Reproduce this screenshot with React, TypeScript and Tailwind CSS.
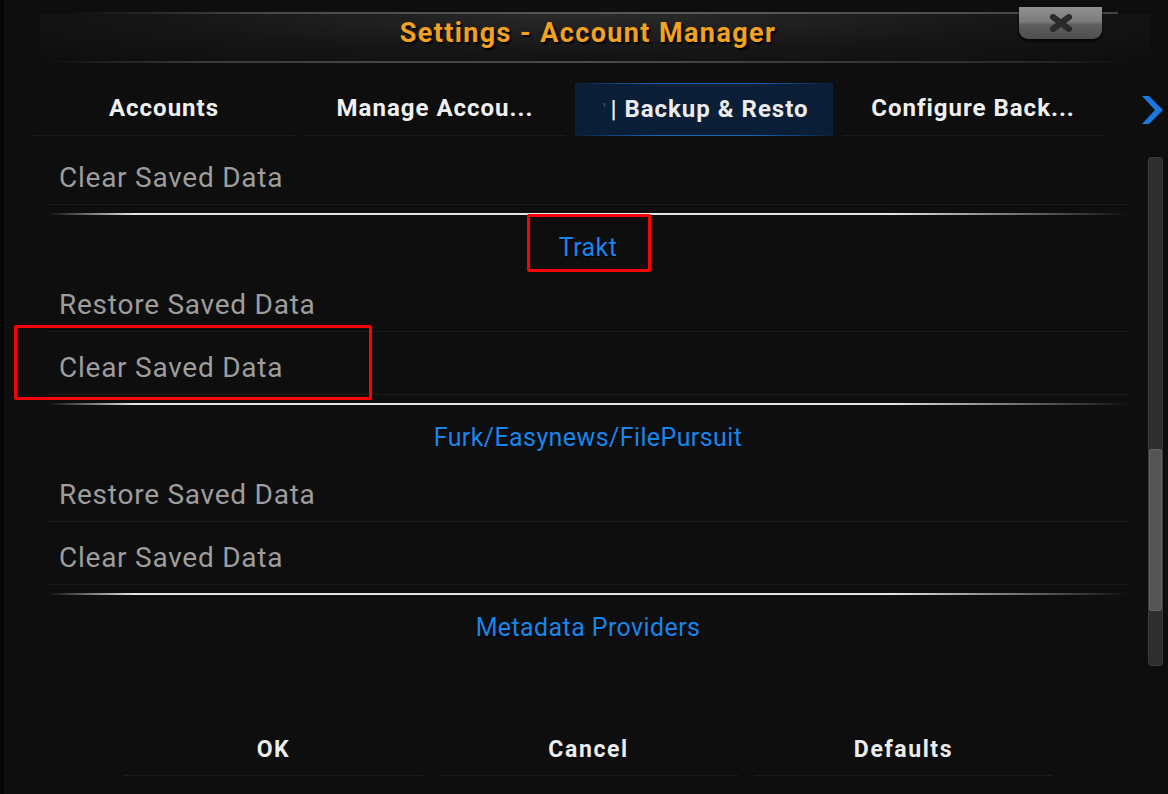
import React from "react";

const font = { fontFamily: "Roboto, 'Liberation Sans', sans-serif" };

function Item({ label }: { label: string }) {
  return (
    <div className="h-[63px] border-b border-[#1c1c1c] pt-[20px] pl-[11px]">
      <div className="text-[28px] leading-[32px] tracking-[0.75px] text-[#9d9d9d]">{label}</div>
    </div>
  );
}

function Category({ label }: { label: string }) {
  return (
    <div className="h-[64px] flex flex-col">
      <div className="mt-[8px] h-[2px] bg-[linear-gradient(to_right,rgba(255,255,255,0)_0%,#e6e6e6_8%,#e6e6e6_78%,rgba(255,255,255,0)_100%)]" />
      <div className="mt-[19px] text-center text-[25px] leading-[28px] tracking-[0.4px] text-[#1687ee] [text-shadow:1px_1px_1px_#000]">
        {label}
      </div>
    </div>
  );
}

function Tab({ label, selected }: { label: string; selected?: boolean }) {
  if (selected) {
    return (
      <div className="w-[258px] h-[53px] flex flex-col bg-[#0a1f37]">
        <div className="h-px bg-[linear-gradient(to_right,rgba(21,101,192,0),#1a64b8_30%,#1a64b8_70%,rgba(21,101,192,0))]" />
        <div className="flex-1 flex items-center justify-center pl-[4px] pb-[2px] text-[24px] tracking-[1px] font-bold text-[#ececec]">
          <span className="text-[#3a5a7a] text-[12px] mr-[4px]">'</span>| Backup &amp; Resto
        </div>
        <div className="h-px bg-[linear-gradient(to_right,rgba(21,101,192,0),#1a64b8_30%,#1a64b8_70%,rgba(21,101,192,0))]" />
      </div>
    );
  }
  return (
    <div className="w-[262px] h-[53px] flex items-center justify-center pb-[2px] border-b border-[#1b1b1b] text-[24px] tracking-[1px] font-bold text-[#f0f0f0]">
      {label}
    </div>
  );
}

function Btn({ label }: { label: string }) {
  return (
    <div className="w-[299px] h-[56px] pt-[6px] flex items-center justify-center border-b border-[#1b1b1b] text-[23px] tracking-[1.6px] font-bold text-[#ededed]">
      {label}
    </div>
  );
}

export default function App() {
  return (
    <div
      className="relative w-[1168px] h-[794px] overflow-hidden bg-[#0e0e0e] flex"
      style={font}
    >
      <div className="w-[4px] h-full bg-[#050505]" />
      <div className="flex-1 flex flex-col">
        {/* Header */}
        <div className="pt-[12px] flex flex-col">
          <div className="ml-[60px] mr-[50px] h-[2px] bg-[linear-gradient(to_right,rgba(90,90,90,0),#4a4a4a_20%,#5a5a5a_60%,#444_100%)]" />
          <div className="h-[47px] ml-[36px] mr-[18px] pb-[8px] pr-[14px] flex items-center justify-center bg-[radial-gradient(ellipse_at_top,#2a2a2a_0%,#161616_55%,#0e0e0e_100%)]">
            <span className="text-[27px] tracking-[1.4px] font-bold text-[#f2a21e] [text-shadow:2px_2px_2px_#000]">
              Settings - Account Manager
            </span>
          </div>
          <div className="ml-[42px] mr-[38px] h-[2px] bg-[linear-gradient(to_right,rgba(80,80,80,0),#3c3c3c_15%,#4a4a4a_50%,#2a2a2a_90%,rgba(40,40,40,0))]" />
        </div>

        {/* Tabs */}
        <div className="mt-[20px] flex items-start">
          <div className="ml-[29px] flex gap-[9px]">
            <Tab label="Accounts" />
            <Tab label="Manage Accou..." />
            <Tab label="" selected />
            <Tab label="Configure Back..." />
          </div>
          <div className="ml-[36px] mt-[13px]">
            <svg width="24" height="28" viewBox="0 0 24 28">
              <polygon points="2,0 9,0 23,14 9,28 2,28 15,14" fill="#1a78e0" />
            </svg>
          </div>
        </div>

        {/* List + scrollbar */}
        <div className="mt-[6px] flex h-[527px]">
          <div className="ml-[44px] w-[1080px] overflow-hidden flex flex-col">
            <Item label="Clear Saved Data" />
            <Category label="Trakt" />
            <Item label="Restore Saved Data" />
            <Item label="Clear Saved Data" />
            <Category label="Furk/Easynews/FilePursuit" />
            <Item label="Restore Saved Data" />
            <Item label="Clear Saved Data" />
            <Category label="Metadata Providers" />
          </div>
          <div className="ml-[20px] mt-[15px] w-[15px] h-[509px] rounded-[3px] bg-[#2e2e2e] border border-[#3a3a3a] flex flex-col">
            <div className="h-[291px]" />
            <div className="h-[162px] rounded-[2px] bg-[#555555] border border-[#646464]" />
          </div>
        </div>

        {/* Buttons */}
        <div className="mt-[51px] ml-[120px] flex gap-[16px]">
          <Btn label="OK" />
          <Btn label="Cancel" />
          <Btn label="Defaults" />
        </div>
      </div>

      {/* Close button */}
      <div className="absolute left-[1019px] top-[7px] w-[83px] h-[32px] rounded-b-[9px] overflow-hidden shadow-[0_2px_3px_rgba(0,0,0,0.8)] bg-[linear-gradient(to_bottom,#909090_0%,#7c7c7c_45%,#5e5e5e_55%,#4e4e4e_100%)] flex items-center justify-center">
        <svg width="26" height="18" viewBox="0 0 26 18">
          <path d="M5 3 L21 15 M21 3 L5 15" stroke="#2a2a2a" strokeWidth="6" strokeLinecap="round" />
        </svg>
      </div>

      {/* Red annotation boxes */}
      <div className="absolute left-[527px] top-[214px] w-[124px] h-[58px] border-[3px] border-[#ff0000] rounded-[2px]" />
      <div className="absolute left-[14px] top-[325px] w-[358px] h-[75px] border-[3px] border-[#ff0000] rounded-[2px]" />
    </div>
  );
}
